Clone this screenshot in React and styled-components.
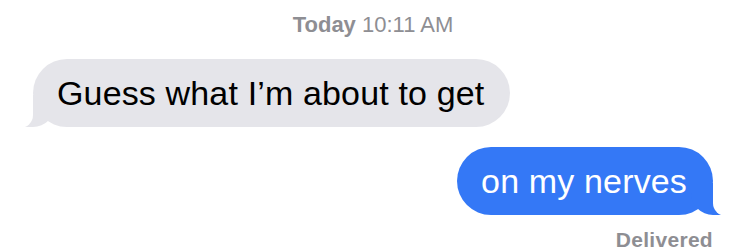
import React from "react";
import styled, { createGlobalStyle } from "styled-components";

const GlobalStyle = createGlobalStyle`
  html, body {
    margin: 0;
    padding: 0;
    background: #ffffff;
    font-family: "Liberation Sans", Arial, sans-serif;
  }
`;

const Thread = styled.div`
  width: 748px;
  height: 249px;
  overflow: hidden;
  display: flex;
  flex-direction: column;
  padding: 11px 35px 0 33px;
  box-sizing: border-box;
`;

const Stamp = styled.div`
  text-align: center;
  font-size: 22px;
  line-height: 28px;
  color: #8e8e93;

  b {
    font-weight: 700;
  }
`;

const Row = styled.div`
  display: flex;
  justify-content: ${(p) => (p.$mine ? "flex-end" : "flex-start")};
  margin-top: ${(p) => p.$top}px;
`;

const Bubble = styled.div`
  position: relative;
  height: 68px;
  line-height: 68px;
  padding: 0 26px 0 24px;
  border-radius: 34px;
  font-size: 34px;
  letter-spacing: 0.15px;
  white-space: nowrap;
  background: ${(p) => (p.$mine ? "#3478f6" : "#e5e5ea")};
  color: ${(p) => (p.$mine ? "#ffffff" : "#000000")};

  &::before {
    content: "";
    position: absolute;
    bottom: 0;
    ${(p) => (p.$mine ? "right: -12px;" : "left: -12px;")}
    width: 34px;
    height: 32px;
    background: ${(p) => (p.$mine ? "#3478f6" : "#e5e5ea")};
    ${(p) =>
      p.$mine
        ? "border-bottom-left-radius: 22px;"
        : "border-bottom-right-radius: 22px;"}
  }

  &::after {
    content: "";
    position: absolute;
    bottom: -1px;
    ${(p) => (p.$mine ? "right: -18px;" : "left: -18px;")}
    width: 18px;
    height: 34px;
    background: #ffffff;
    ${(p) =>
      p.$mine
        ? "border-bottom-left-radius: 13px;"
        : "border-bottom-right-radius: 13px;"}
  }
`;

const Status = styled.div`
  text-align: right;
  margin-top: 13px;
  padding-right: 0;
  font-size: 21px;
  font-weight: 700;
  letter-spacing: 0.3px;
  color: #8e8e93;
`;

export default function App() {
  return (
    <>
      <GlobalStyle />
      <Thread>
        <Stamp>
          <b>Today</b> 10:11 AM
        </Stamp>
        <Row $top={20}>
          <Bubble>Guess what I’m about to get</Bubble>
        </Row>
        <Row $mine $top={20}>
          <Bubble $mine>on my nerves</Bubble>
        </Row>
        <Status>Delivered</Status>
      </Thread>
    </>
  );
}
